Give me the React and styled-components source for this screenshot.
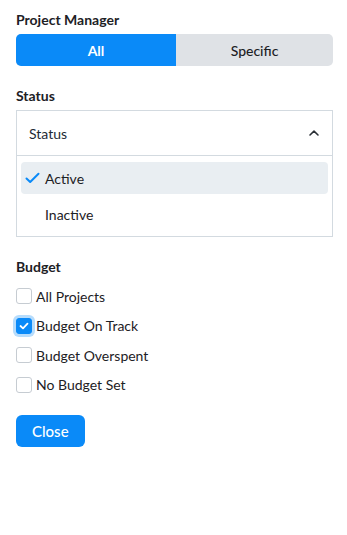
import styled, { createGlobalStyle } from 'styled-components';

const GlobalStyle = createGlobalStyle`
  body {
    margin: 0;
    font-family: Lato, "Open Sans", sans-serif;
    background: #ffffff;
    color: #1d2125;
  }
`;

const blue = '#0a8af8';

const Panel = styled.div`
  width: 317px;
  padding: 10px 14px 0 16px;
  display: flex;
  flex-direction: column;
`;

const Section = styled.div`
  display: flex;
  flex-direction: column;
  gap: ${props => props.gap || '4px'};
  margin-bottom: ${props => props.after || '20px'};
`;

const Label = styled.div`
  font-size: 14px;
  font-weight: 700;
  line-height: 20px;
  color: #1d2125;
`;

const Toggle = styled.div`
  display: grid;
  grid-template-columns: 160px 1fr;
  height: 32px;
  border-radius: 5px;
  overflow: hidden;
  background: #dfe2e6;
`;

const ToggleOption = styled.button`
  border: none;
  margin: 0;
  font-family: inherit;
  font-size: 14px;
  font-weight: ${props => (props.active ? 700 : 500)};
  color: ${props => (props.active ? '#ffffff' : '#1d2125')};
  background: ${props => (props.active ? blue : 'transparent')};
`;

const Dropdown = styled.div`
  border: 1px solid #d3dae0;
  display: flex;
  flex-direction: column;
`;

const DropdownHeader = styled.div`
  height: 44px;
  display: flex;
  align-items: center;
  justify-content: space-between;
  padding: 0 12px 0 12px;
  border-bottom: 1px solid #d3dae0;
  font-size: 14px;
  color: #1d2a35;
`;

const OptionList = styled.div`
  display: flex;
  flex-direction: column;
  gap: 4px;
  padding: 6px 4px;
`;

const Option = styled.div`
  height: 32px;
  display: flex;
  align-items: center;
  gap: 5px;
  padding-left: 4px;
  border-radius: 4px;
  font-size: 14px;
  color: #1d2125;
  background: ${props => (props.selected ? '#e9eef2' : 'transparent')};
`;

const CheckSlot = styled.span`
  width: 15px;
  display: flex;
  align-items: center;
`;

const CheckList = styled.div`
  display: flex;
  flex-direction: column;
  gap: 9.5px;
  margin-top: 5px;
`;

const CheckRow = styled.label`
  height: 20px;
  display: flex;
  align-items: center;
  gap: 4px;
  font-size: 14px;
  color: #1d2125;
`;

const Box = styled.span`
  width: 14px;
  height: 14px;
  border-radius: 3px;
  border: 1px solid ${props => (props.checked ? blue : '#c6ccd2')};
  background: ${props => (props.checked ? blue : '#ffffff')};
  box-shadow: ${props => (props.checked ? '0 0 0 3px #b6dcfc' : 'none')};
  display: flex;
  align-items: center;
  justify-content: center;
`;

const CloseButton = styled.button`
  align-self: flex-start;
  height: 32px;
  padding: 0 16px;
  border: none;
  border-radius: 6px;
  background: ${blue};
  color: #ffffff;
  font-family: inherit;
  font-size: 15px;
  font-weight: 500;
`;

const budgetOptions = [
  { label: 'All Projects', checked: false },
  { label: 'Budget On Track', checked: true },
  { label: 'Budget Overspent', checked: false },
  { label: 'No Budget Set', checked: false }
];

export default function App() {
  return (
    <>
      <GlobalStyle />
      <Panel>
        <Section>
          <Label>Project Manager</Label>
          <Toggle>
            <ToggleOption active>All</ToggleOption>
            <ToggleOption>Specific</ToggleOption>
          </Toggle>
        </Section>

        <Section after="20px">
          <Label>Status</Label>
          <Dropdown>
            <DropdownHeader>
              Status
              <svg width="12" height="8" viewBox="0 0 12 8" fill="none">
                <path d="M2 6 L6 2.2 L10 6" stroke="#2a2f35" strokeWidth="1.6" strokeLinecap="round" strokeLinejoin="round" />
              </svg>
            </DropdownHeader>
            <OptionList>
              <Option selected>
                <CheckSlot>
                  <svg width="15" height="12" viewBox="0 0 15 12" fill="none">
                    <path d="M1.5 6.5 L5.2 10 L13.5 1.8" stroke={blue} strokeWidth="2" strokeLinecap="round" strokeLinejoin="round" />
                  </svg>
                </CheckSlot>
                Active
              </Option>
              <Option>
                <CheckSlot />
                Inactive
              </Option>
            </OptionList>
          </Dropdown>
        </Section>

        <Section>
          <Label>Budget</Label>
          <CheckList>
            {budgetOptions.map(opt => (
              <CheckRow key={opt.label}>
                <Box checked={opt.checked}>
                  {opt.checked && (
                    <svg width="10" height="8" viewBox="0 0 10 8" fill="none">
                      <path d="M1.5 4 L4 6.3 L8.5 1.7" stroke="#fff" strokeWidth="1.8" strokeLinecap="round" strokeLinejoin="round" />
                    </svg>
                  )}
                </Box>
                {opt.label}
              </CheckRow>
            ))}
          </CheckList>
        </Section>

        <CloseButton>Close</CloseButton>
      </Panel>
    </>
  );
}
